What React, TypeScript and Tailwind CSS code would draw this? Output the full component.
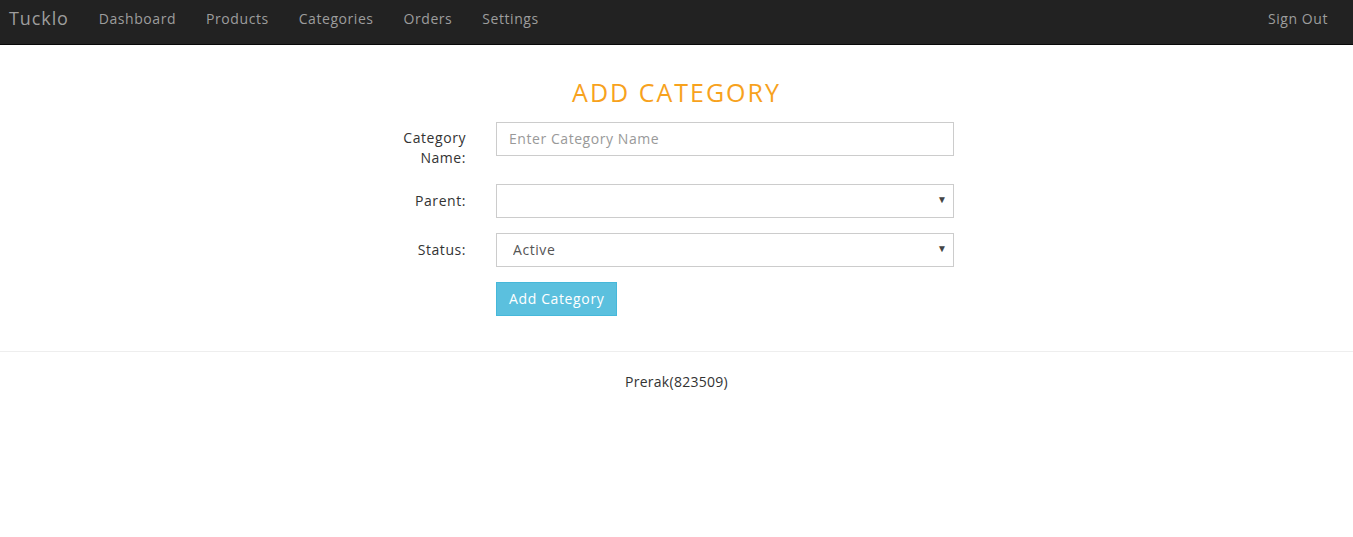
import { useState } from 'react';

const navLinks = ['Dashboard', 'Products', 'Categories', 'Orders', 'Settings'];

function Navbar() {
    return (
        <nav className="h-[45px] bg-[#222222] border-b border-[#080808] flex items-start justify-between">
            <div className="flex items-start">
                <a href="#" className="pl-[9px] pr-[15px] text-[18px] text-[#9d9d9d] tracking-[0.05em] leading-[37px]">
                    Tucklo
                </a>
                {navLinks.map((l) => (
                    <a key={l} href="#" className="px-[15px] text-[14px] text-[#9d9d9d] tracking-[0.04em] leading-[37px]">
                        {l}
                    </a>
                ))}
            </div>
            <a href="#" className="pr-[25px] text-[14px] text-[#9d9d9d] tracking-[0.04em] leading-[37px]">
                Sign Out
            </a>
        </nav>
    );
}

function SelectBox({ value, options }: { value: string; options: string[] }) {
    const [v, setV] = useState(value);
    return (
        <div className="relative w-full">
            <select
                value={v}
                onChange={(e) => setV(e.target.value)}
                className="appearance-none w-full h-[34px] border border-[#cccccc] bg-white pl-[16px] pr-8 pb-[1px] text-[14px] text-[#555555] tracking-[0.04em] outline-none"
            >
                {options.map((o) => (
                    <option key={o} value={o}>
                        {o}
                    </option>
                ))}
            </select>
            <span className="absolute right-[7px] top-[8px] text-[10px] text-[#444444] pointer-events-none">▼</span>
        </div>
    );
}

export default function App() {
    return (
        <div className="min-h-[537px] bg-white text-[#333333] font-['Open_Sans',sans-serif]">
            <Navbar />

            <main className="pt-[34px]">
                <h2 className="text-center text-[25px] leading-[26px] text-[#f7a21d] tracking-[0.08em]">ADD CATEGORY</h2>

                <form className="w-[593px] mx-auto mt-[17px] pr-[19px] flex flex-col gap-[15px]">
                    <div className="flex gap-[30px]">
                        <label className="w-[86px] shrink-0 text-right text-[14px] leading-[20px] pt-[6px] pb-[1px] font-medium tracking-[0.04em]">
                            Category Name:
                        </label>
                        <input
                            placeholder="Enter Category Name"
                            className="w-full h-[34px] border border-[#cccccc] px-[12px] pb-[1px] text-[14px] tracking-[0.04em] placeholder:text-[#999999] outline-none"
                        />
                    </div>

                    <div className="flex gap-[30px] items-center">
                        <label className="w-[86px] shrink-0 text-right text-[14px] leading-[20px] font-medium tracking-[0.04em]">
                            Parent:
                        </label>
                        <SelectBox value="" options={['']} />
                    </div>

                    <div className="flex gap-[30px] items-center">
                        <label className="w-[86px] shrink-0 text-right text-[14px] leading-[20px] font-medium tracking-[0.04em]">
                            Status:
                        </label>
                        <SelectBox value="Active" options={['Active', 'Inactive']} />
                    </div>

                    <div className="pl-[116px]">
                        <button
                            type="button"
                            className="h-[34px] px-[12px] pb-[1px] bg-[#5bc0de] border border-[#46b8da] text-white text-[14px] tracking-[0.045em]"
                        >
                            Add Category
                        </button>
                    </div>
                </form>

                <hr className="mt-[35px] border-t border-[#eeeeee]" />

                <footer className="text-center text-[14px] leading-[20px] pt-[20px] tracking-[0.02em]">Prerak(823509)</footer>
            </main>
        </div>
    );
}
